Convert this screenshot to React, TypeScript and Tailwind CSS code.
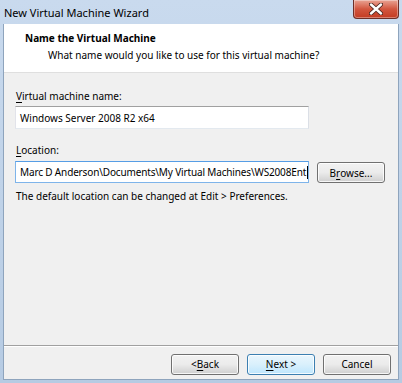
import React from "react";

const font = { fontFamily: '"Segoe UI", "Noto Sans", sans-serif' };

const WinButton: React.FC<{ primary?: boolean; className?: string; children: React.ReactNode }> = ({
  primary,
  className,
  children,
}) => (
  <div
    className={
      "flex h-[21px] w-[68px] items-center justify-center rounded-[3px] border text-[10px] text-black shadow-[inset_0_0_0_1px_rgba(255,255,255,0.8)] " +
      (primary
        ? "border-[#3c7fb1] bg-gradient-to-b from-[#eaf6fd] via-[#d9f0fc] to-[#bee6fd] "
        : "border-[#707070] bg-gradient-to-b from-[#f2f2f2] via-[#ebebeb] to-[#cfcfcf] ") +
      (className ?? "")
    }
  >
    {children}
  </div>
);

const App: React.FC = () => {
  return (
    <div
      className="flex h-[383px] w-[402px] flex-col bg-gradient-to-b from-[#c9daee] to-[#b6cbe3]"
      style={font}
    >
      {/* title bar */}
      <div className="flex h-[24px] shrink-0 items-start justify-between pl-[4px] pr-[3px]">
        <span className="mt-[5px] text-[11px] leading-[16px] text-black">New Virtual Machine Wizard</span>
        <div className="flex h-[19px] w-[46px] items-center justify-center rounded-b-[4px] border border-t-0 border-[#6d2f28] bg-gradient-to-b from-[#e8a394] via-[#d2563f] to-[#c33b22] shadow-[inset_0_0_0_1px_rgba(255,255,255,0.35)]">
          <svg width="14" height="12" viewBox="0 0 14 12">
            <path
              d="M2 1.5 L12 10.5 M12 1.5 L2 10.5"
              stroke="#4a2620"
              strokeWidth="4.2"
              strokeLinecap="round"
            />
            <path
              d="M2 1.5 L12 10.5 M12 1.5 L2 10.5"
              stroke="#ffffff"
              strokeWidth="2.4"
              strokeLinecap="round"
            />
          </svg>
        </div>
      </div>

      {/* client area */}
      <div className="mx-[3px] mb-[3px] flex flex-1 flex-col border border-t-0 border-[#8ea4bd] bg-[#f0f0f0]">
        <div className="h-[49px] shrink-0 border-b border-[#dfdfdf] bg-white">
          <div className="ml-[21px] mt-[6px] text-[10px] font-bold leading-[16px] text-black">
            Name the Virtual Machine
          </div>
          <div className="ml-[44px] mt-[1px] text-[10px] leading-[16px] text-black">
            What name would you like to use for this virtual machine?
          </div>
        </div>

        <div className="flex flex-1 flex-col pl-[11px] pt-[15px] text-[10px] leading-[16px] text-black">
          <div className="ml-[1px]">
            <span className="underline underline-offset-2">V</span>irtual machine name:
          </div>
          <div className="mt-[2px] flex h-[23px] w-[294px] items-center border border-[#abadb3] border-t-[#a0a0a0] border-l-[#e2e3ea] border-r-[#dbdfe6] border-b-[#e3e9ef] bg-white pl-[4px]">
            Windows Server 2008 R2 x64
          </div>

          <div className="ml-[1px] mt-[13px]">
            <span className="underline underline-offset-2">L</span>ocation:
          </div>
          <div className="mt-[3px] flex items-center gap-[8px]">
            <div className="flex h-[22px] w-[294px] shrink-0 items-center overflow-hidden whitespace-nowrap border border-[#7eb4ea] border-t-[#569de5] bg-white pl-[4px]">
              <span className="tracking-[-0.15px]">
                {"Marc D Anderson\\Documents\\My Virtual Machines\\WS2008Ent"}
              </span>
              <span className="ml-[1px] h-[13px] w-[1px] shrink-0 bg-black" />
            </div>
            <WinButton className="mt-[1px]">
              B<span className="underline underline-offset-2">r</span>owse...
            </WinButton>
          </div>
          <div className="ml-[1px] mt-[5px]">The default location can be changed at Edit &gt; Preferences.</div>
        </div>

        <div className="flex h-[34px] shrink-0 items-start justify-end gap-[8px] border-t border-[#a0a0a0] pr-[7px] pt-[8px] shadow-[inset_0_1px_0_#ffffff]">
          <WinButton>
            {"< "}
            <span className="underline underline-offset-2">B</span>ack
          </WinButton>
          <WinButton primary>
            <span className="underline underline-offset-2">N</span>
            {"ext >"}
          </WinButton>
          <WinButton>Cancel</WinButton>
        </div>
      </div>
    </div>
  );
};

export default App;
